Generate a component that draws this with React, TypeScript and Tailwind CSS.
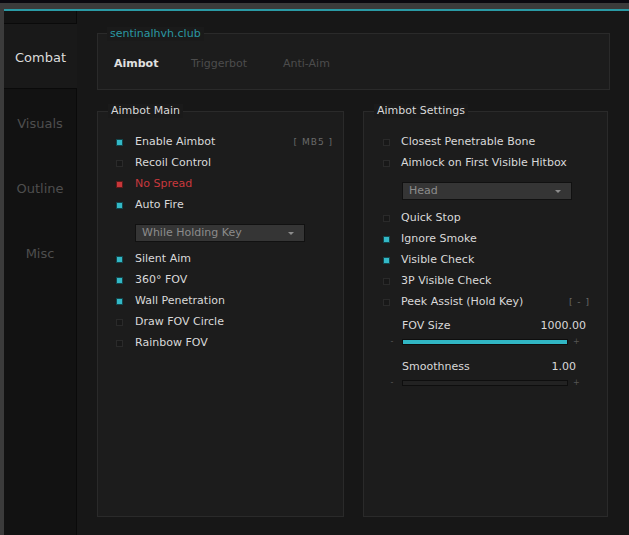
import React from "react";

const font = { fontFamily: '"DejaVu Sans", Verdana, sans-serif' };

type Item = { label: string; on?: boolean; red?: boolean; bind?: string };

function Check({ on, red }: { on?: boolean; red?: boolean }) {
  const cls = red
    ? "bg-[#c8373a] border-[#5a1a1a]"
    : on
      ? "bg-[#33b8c6] border-[#12474d]"
      : "bg-[#181818] border-[#2a2a2a]";
  return <span className={`block h-[7px] w-[7px] shrink-0 border ${cls}`} />;
}

function Row({ item, gap }: { item: Item; gap: string }) {
  return (
    <div className="flex h-[21px] items-center">
      <Check on={item.on} red={item.red} />
      <span className={`${gap} flex-1 ${item.red ? "text-[#c8383c]" : "text-[#d9d9d9]"}`}>{item.label}</span>
      {item.bind && <span className="text-[9px] tracking-[1px] text-[#6a6a6a]">{item.bind}</span>}
    </div>
  );
}

function Select({ value, className }: { value: string; className: string }) {
  return (
    <div
      className={`flex h-[18px] w-[170px] items-center justify-between border border-[#111] bg-[#353535] pl-[6px] pr-[10px] text-[#8c8c8c] ${className}`}
    >
      <span>{value}</span>
      <span className="h-0 w-0 border-x-[3px] border-t-[3px] border-x-transparent border-t-[#8c8c8c]" />
    </div>
  );
}

function Slider({ label, value, pct, pr }: { label: string; value: string; pct: number; pr: string }) {
  return (
    <div className="ml-[6px] w-[197px]">
      <div className={`flex h-[18px] items-center justify-between pl-[13px] text-[#d9d9d9] ${pr}`}>
        <span>{label}</span>
        <span>{value}</span>
      </div>
      <div className="mt-[3px] flex items-center text-[8px] leading-none text-[#555]">
        <span className="w-[6px] text-center">-</span>
        <div className="ml-[7px] h-[6px] w-[166px] border border-[#0e0e0e] bg-[#222]">
          <div className="h-full bg-[#31b6c4]" style={{ width: `${pct}%` }} />
        </div>
        <span className="ml-[5px] w-[6px] text-center">+</span>
      </div>
    </div>
  );
}

function Group({ title, className, children }: { title: string; className: string; children: React.ReactNode }) {
  return (
    <div className={`relative border border-[#2a2a2a] bg-[#1c1c1c] ${className}`}>
      <span className="absolute -top-[8px] left-[10px] bg-[#1a1a1a] px-[3px] leading-[14px] text-[#d8d8d8]">
        {title}
      </span>
      {children}
    </div>
  );
}

const mainTop: Item[] = [
  { label: "Enable Aimbot", on: true, bind: "[ MB5 ]" },
  { label: "Recoil Control" },
  { label: "No Spread", red: true },
  { label: "Auto Fire", on: true },
];
const mainBottom: Item[] = [
  { label: "Silent Aim", on: true },
  { label: "360° FOV", on: true },
  { label: "Wall Penetration", on: true },
  { label: "Draw FOV Circle" },
  { label: "Rainbow FOV" },
];
const setTop: Item[] = [{ label: "Closest Penetrable Bone" }, { label: "Aimlock on First Visible Hitbox" }];
const setBottom: Item[] = [
  { label: "Quick Stop" },
  { label: "Ignore Smoke", on: true },
  { label: "Visible Check", on: true },
  { label: "3P Visible Check" },
  { label: "Peek Assist (Hold Key)", bind: "[ - ]" },
];

export default function App() {
  return (
    <div className="h-[535px] w-[629px] overflow-hidden bg-[#0a0910] pt-[3px] text-[11px]" style={font}>
      <div className="flex h-[532px] flex-col bg-[#3b3b3b] pl-[4px] pt-[6px]">
        <div className="h-[2px] bg-[#2a9aa5]" />
        <div className="flex flex-1">
          <div className="flex w-[73px] flex-col bg-[#121212]">
            <div className="h-[13px] border-b border-r border-[#0a0a0a] bg-[#141414]" />
            <div className="flex h-[64px] items-center justify-center bg-[#191919] pt-[4px] text-[13px] text-[#dcdcdc]">
              Combat
            </div>
            <div className="flex flex-1 flex-col border-r border-t border-[#0a0a0a] pt-[2px] text-[13px] text-[#4e4e4e]">
              {["Visuals", "Outline", "Misc"].map((t) => (
                <div key={t} className="flex h-[65px] items-center justify-center">
                  {t}
                </div>
              ))}
            </div>
          </div>
          <div className="flex flex-1 flex-col bg-[#171717] pb-[18px] pl-[20px] pr-[19px] pt-[22px]">
            <div className="relative flex h-[57px] items-center border border-[#2a2a2a] bg-[#1c1c1c] pl-[16px] pt-[5px]">
              <span className="absolute -top-[7px] left-[9px] bg-[#1a1a1a] px-[3px] leading-[14px] text-[#2a98a3]">
                sentinalhvh.club
              </span>
              <span className="w-[77px] font-bold text-[#e0e0e0]">Aimbot</span>
              <span className="w-[92px] text-[#4c4c4c]">Triggerbot</span>
              <span className="text-[#4c4c4c]">Anti-Aim</span>
            </div>
            <div className="mt-[21px] flex flex-1 gap-[19px]">
              <Group title="Aimbot Main" className="w-[247px] pl-[18px] pr-[10px] pt-[20px]">
                {mainTop.map((i) => (
                  <Row key={i.label} item={i} gap="ml-[12px]" />
                ))}
                <Select value="While Holding Key" className="ml-[19px] mb-[7px] mt-[8px]" />
                {mainBottom.map((i) => (
                  <Row key={i.label} item={i} gap="ml-[12px]" />
                ))}
              </Group>
              <Group title="Aimbot Settings" className="w-[245px] pl-[19px] pr-[17px] pt-[20px]">
                {setTop.map((i) => (
                  <Row key={i.label} item={i} gap="ml-[11px]" />
                ))}
                <Select value="Head" className="ml-[19px] mb-[8px] mt-[8px]" />
                {setBottom.map((i) => (
                  <Row key={i.label} item={i} gap="ml-[11px]" />
                ))}
                <div className="mt-[4px]">
                  <Slider label="FOV Size" value="1000.00" pct={100} pr="pr-0" />
                </div>
                <div className="mt-[12px]">
                  <Slider label="Smoothness" value="1.00" pct={0} pr="pr-[10px]" />
                </div>
              </Group>
            </div>
          </div>
        </div>
      </div>
    </div>
  );
}
